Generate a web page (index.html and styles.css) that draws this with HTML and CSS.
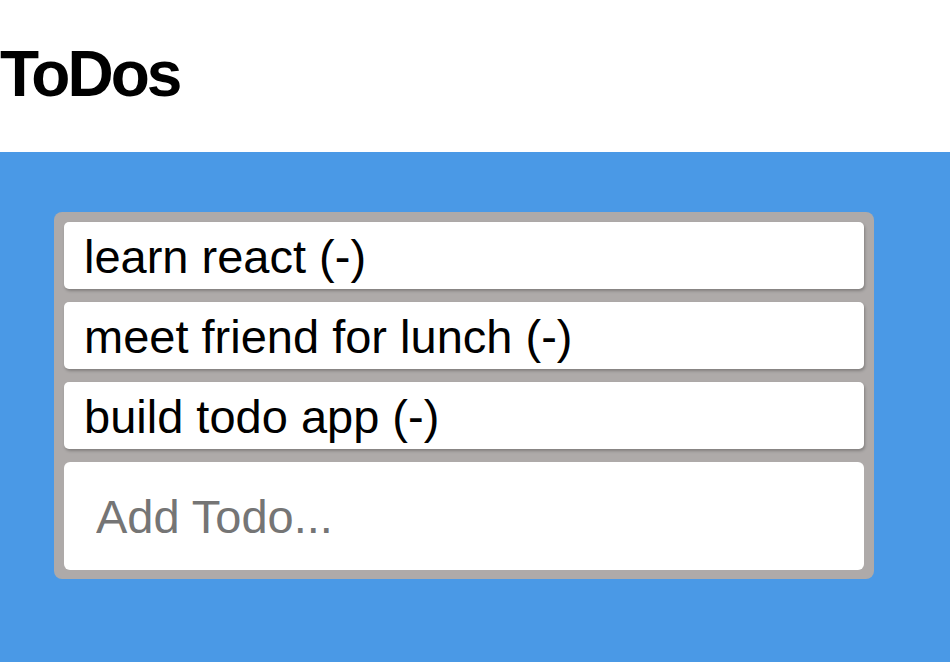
FILE: index.html
```html
<!DOCTYPE html>
<html lang="en">
<head>
<meta charset="UTF-8" />
<meta name="viewport" content="width=device-width, initial-scale=1" />
<title>ToDos</title>
<link rel="stylesheet" href="styles.css">
</head>
<body>

<header class="page-header">
  <h1>ToDos</h1>
</header>

<main class="todo-area">
  <div class="todo-list">
    <div class="todo-item">learn react (-)</div>
    <div class="todo-item">meet friend for lunch (-)</div>
    <div class="todo-item">build todo app (-)</div>
    <input class="todo-input" type="text" placeholder="Add Todo..." />
  </div>
</main>

</body>
</html>
```

FILE: styles.css
```css
body {
  margin: 0;
  font-family: "Liberation Sans", Arial, sans-serif;
  background: #fff;
}
.page-header {
  height: 152px;
  box-sizing: border-box;
  padding-top: 37px;
}
.page-header h1 {
  margin: 0;
  font-size: 64px;
  line-height: 74px;
  font-weight: bold;
  letter-spacing: -3px;
  color: #000;
}
.todo-area {
  background-color: #4a99e6;
  min-height: 510px;
  box-sizing: border-box;
  padding: 60px 0 0 54px;
}
.todo-list {
  width: 820px;
  box-sizing: border-box;
  background-color: #aeaaa9;
  border-radius: 8px;
  padding: 10px 10px 9px;
  display: flex;
  flex-direction: column;
  gap: 13px;
}
.todo-item {
  background-color: #fff;
  border-radius: 5px;
  height: 67px;
  box-sizing: border-box;
  padding: 8px 20px 0;
  font-size: 47px;
  line-height: 54px;
  color: #000;
  box-shadow: 1px 2px 3px rgba(0,0,0,0.25);
}
.todo-input {
  display: block;
  height: 108px;
  box-sizing: border-box;
  border: none;
  border-radius: 6px;
  padding: 0 32px;
  font-family: "Liberation Sans", Arial, sans-serif;
  font-size: 47px;
  line-height: 54px;
  color: #000;
  background-color: #fff;
  outline: none;
}
.todo-input::placeholder {
  color: #757575;
}
```
